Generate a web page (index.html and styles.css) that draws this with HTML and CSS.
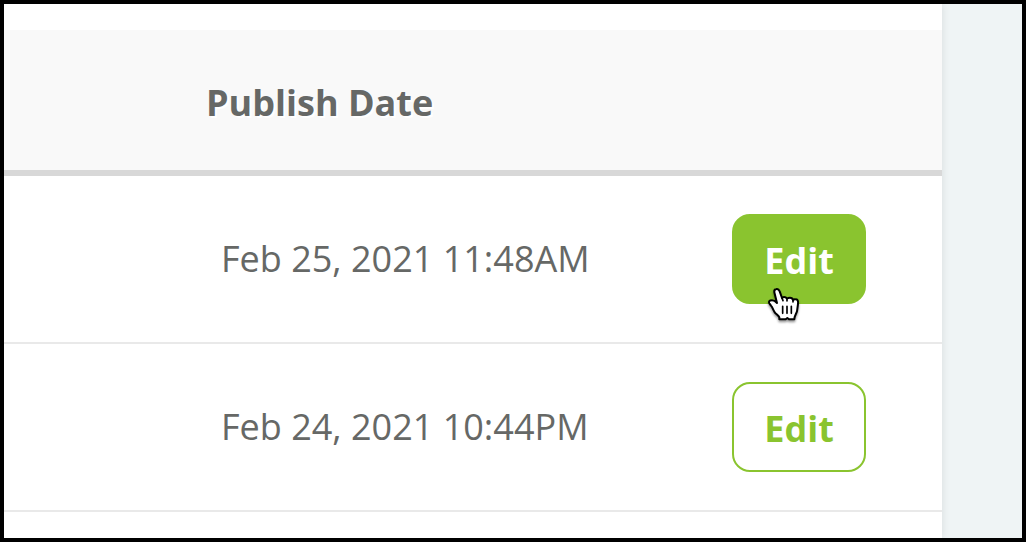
FILE: index.html
```
<!DOCTYPE html>
<html lang="en">
<head>
    <meta charset="UTF-8">
    <meta name="viewport" content="width=device-width, initial-scale=1.0">
    <title>Publish Date</title>
    <link rel="stylesheet" href="styles.css">
</head>
<body>
    <main class="panel">
        <table class="posts">
            <thead>
                <tr>
                    <th class="date" scope="col">Publish Date</th>
                    <td class="actions"></td>
                </tr>
            </thead>
            <tbody>
                <tr>
                    <td class="date">Feb 25, 2021 11:48AM</td>
                    <td class="actions">
                        <div class="action">
                            <button type="button" class="btn active">Edit</button>
                            <svg class="cursor" viewBox="0 0 150 150" aria-hidden="true">
                                <path d="M49 27C44 28 42 32 43 37L51 69C47 65 42 61 36 61C28 61 25 65 28 70L33 77C38 82 39 89 43 95C47 102 56 106 58 112V118H77L82 114L87 118H103C102 110 109 101 111 94L114 72C115 64 113 59 108 58C105 57 101 58 99 60C98 55 95 53 90 53C86 53 83 54 81 56C79 53 76 51 72 51C69 51 67 52 66 54L59 34C57 29 53 26 49 27Z"/>
                                <path class="lines" d="M81 57V63M99 61V66M66 54L69 62M68 79V100M81 79V100M94 79V100"/>
                            </svg>
                        </div>
                    </td>
                </tr>
                <tr>
                    <td class="date">Feb 24, 2021 10:44PM</td>
                    <td class="actions">
                        <div class="action">
                            <button type="button" class="btn">Edit</button>
                        </div>
                    </td>
                </tr>
            </tbody>
        </table>
    </main>
    <aside class="gutter"></aside>
</body>
</html>
```
FILE: styles.css
```
:root {
    --green: #8ac42f;
    --text: #666866;
    --page-bg: #eff4f5;
}

* {
    box-sizing: border-box;
}

body {
    font-family: 'Open Sans', sans-serif;
    font-size: 36px;
    line-height: 48px;
    color: var(--text);
    background: var(--page-bg);
    margin: 0;
    min-height: 100vh;
    display: flex;
    border: 4px solid #000;
}

.panel {
    flex: 1;
    background: #fff;
    padding-top: 26px;
    box-shadow: 0 0 8px rgba(0, 0, 0, 0.1);
    clip-path: inset(0 -10px 0 0);
}

.gutter {
    width: 80px;
}

.posts {
    width: 100%;
    border-collapse: separate;
    border-spacing: 0;
}

.posts th,
.posts td {
    padding: 0;
    text-align: left;
    vertical-align: middle;
}

.posts thead th,
.posts thead td {
    height: 146px;
    background: #f9f9f9;
    border-bottom: 6px solid #d8d8d8;
}

.posts tbody td {
    height: 168px;
    border-bottom: 2px solid #e9e9e9;
}

.posts th.date {
    padding-left: 202px;
    padding-top: 6px;
    font-weight: 700;
    text-shadow: 2px 2px 0 #fff;
}

.posts td.date {
    padding-left: 217px;
}

.posts .actions {
    width: 210px;
    padding-right: 76px;
}

.action {
    position: relative;
}

.btn {
    display: block;
    width: 100%;
    height: 90px;
    padding: 4px 0 0;
    font: inherit;
    font-weight: 700;
    color: var(--green);
    background: #fff;
    border: 2px solid var(--green);
    border-radius: 18px;
    cursor: pointer;
}

.btn.active {
    color: #fff;
    background: var(--green);
}

/* pointer over the first button */
.cursor {
    position: absolute;
    left: 28px;
    top: 66px;
    width: 50px;
    height: 50px;
    fill: #fff;
    stroke: #000;
    stroke-width: 6px;
    stroke-linejoin: round;
    filter: drop-shadow(0 2px 1px rgba(0, 0, 0, 0.4));
    pointer-events: none;
}

.cursor .lines {
    fill: none;
    stroke-width: 5px;
    stroke-linecap: round;
}
```
